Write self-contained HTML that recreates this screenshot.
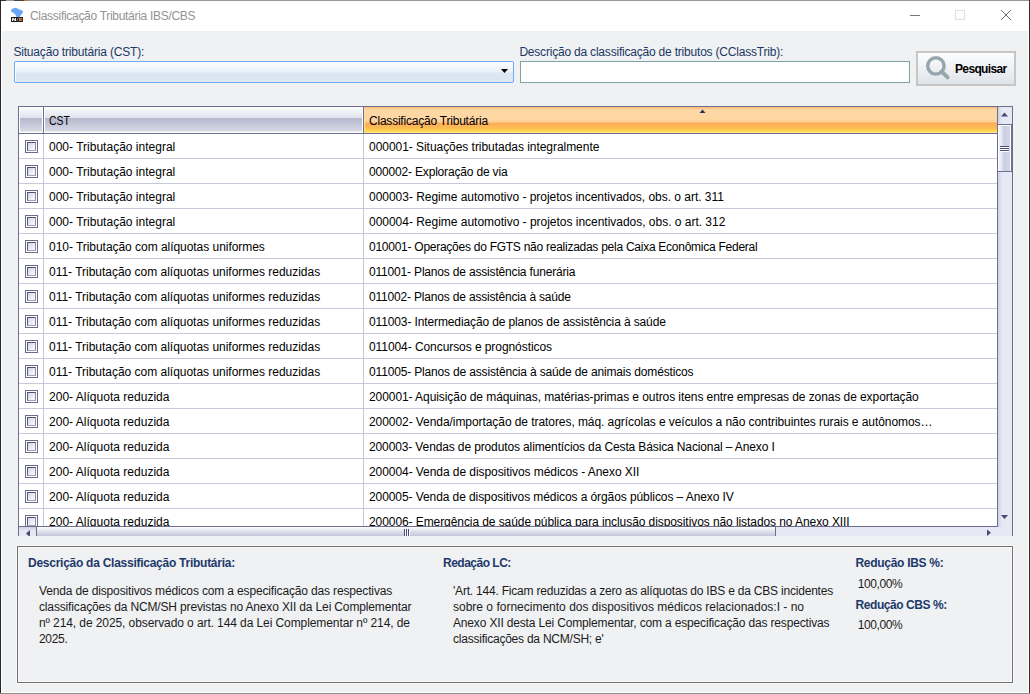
<!DOCTYPE html>
<html><head><meta charset="utf-8">
<style>
*{margin:0;padding:0;box-sizing:border-box}
html,body{width:1030px;height:694px;overflow:hidden;background:#f0f1f3}
body{position:relative;font-family:"Liberation Sans",sans-serif;font-size:12px;line-height:16px;color:#000}
.a{position:absolute}
.t{position:absolute;white-space:nowrap;font-size:12px;line-height:16px}
.b{font-weight:bold}
.lbl{color:#1b3764}
.hdr{color:#1d3a6a}
.txt{color:#1b1b1b}
</style></head><body>

<div class="a" style="left:0;top:0;width:1030px;height:1px;background:#9a9a9a"></div>
<div class="a" style="left:0;top:0;width:6px;height:1px;background:#333"></div>
<div class="a" style="left:14px;top:0;width:10px;height:1px;background:#444"></div>
<div class="a" style="left:24px;top:0;width:4px;height:1px;background:#c8742c"></div>
<div class="a" style="left:0;top:0;width:1px;height:694px;background:#262626"></div>
<div class="a" style="left:1029px;top:0;width:1px;height:694px;background:#333"></div>
<div class="a" style="left:0;top:693px;width:1030px;height:1px;background:#8c8c8c"></div>
<div class="a" style="left:1px;top:1px;width:1028px;height:692px;background:#fff"></div>
<div class="a" style="left:2px;top:31px;width:1026px;height:661px;background:#f0f1f3"></div>
<svg class="a" style="left:0;top:0" width="30" height="30" viewBox="0 0 30 30">
<path d="M11 10.5 L12 8.8 L13.5 8.6 L14.5 7.8 L16 8 L17.5 8.3 L18.5 9.3 L20.5 9.8 L23 11 L22.8 12.8 L21.3 14.6 L20 16.5 L18.5 18.5 L17.5 19.5 L16.8 18 L16 15.5 L14.8 14 L13.5 12.8 L11.5 12.2 Z" fill="#6aa6f6"/>
<rect x="11" y="17" width="12" height="5" fill="#1a1a1a"/>
<path d="M12 18 H13.3 L14.8 19.8 V18 H16 V21 H14.7 L13.2 19.2 V21 H12 Z" fill="#f2f2f2"/>
<path d="M16.5 21 L18 17.5 L18.6 17.5 L17.3 21 Z" fill="#6aa6f6"/>
<rect x="19" y="18" width="3.2" height="3" fill="#f08030"/>
<rect x="20.2" y="19.2" width="2" height="0.7" fill="#1a1a1a"/>
</svg>
<div id="title" class="t" style="left:30px;top:8px;letter-spacing:-0.297px;color:#939393">Classificação Tributária IBS/CBS</div>

<div class="a" style="left:910px;top:15px;width:10px;height:1px;background:#7a7a7a"></div>
<div class="a" style="left:955px;top:10px;width:10px;height:10px;border:1px solid #e0e0e0"></div>
<svg class="a" style="left:1000px;top:9px" width="12" height="12" viewBox="0 0 12 12"><path d="M1 1 L11 11 M11 1 L1 11" stroke="#6c6c6c" stroke-width="1"/></svg>
<div id="lbl1" class="t lbl" style="left:13.4px;top:44px;letter-spacing:-0.176px;">Situação tributária (CST):</div>

<div id="lbl2" class="t lbl" style="left:519.4px;top:44px;letter-spacing:-0.204px;">Descrição da classificação de tributos (CClassTrib):</div>

<div class="a" style="left:14px;top:61px;width:500px;height:22px;border:1px solid #6eaef6;border-radius:2px;box-shadow:inset 1px 1px 0 #fbfdff;background:linear-gradient(#fdfeff 0px,#e9f0f9 10px,#dde7f4 11px,#dbe5f3 20px)"></div>
<svg class="a" style="left:501px;top:69px" width="8" height="5" viewBox="0 0 8 5"><path d="M0 0 H7 L3.5 4 Z" fill="#000"/></svg>
<div class="a" style="left:520px;top:61px;width:390px;height:22px;border:1px solid #82a0a8;background:#fff"></div>
<div class="a" style="left:916px;top:51px;width:100px;height:35px;border:2px solid #c6c6c6;background:linear-gradient(#fdfdfe,#dfe4ea)"></div>
<svg class="a" style="left:924px;top:55px" width="28" height="26" viewBox="0 0 28 26"><circle cx="11.9" cy="10.9" r="8.2" fill="none" stroke="#95a6ad" stroke-width="3.4"/><path d="M17.5 16.5 L23.6 22.4" stroke="#95a6ad" stroke-width="3.9" stroke-linecap="round"/></svg>
<div id="btn" class="t b" style="left:955px;top:61px;letter-spacing:-0.65px;color:#000">Pesquisar</div>

<div class="a" style="left:18px;top:106px;width:995px;height:1px;background:#6e6e90"></div>
<div class="a" style="left:18px;top:106px;width:1px;height:430px;background:#6e6e90"></div>
<div class="a" style="left:1012px;top:106px;width:1px;height:430px;background:#6e6e90"></div>
<div class="a" style="left:19px;top:527px;width:993px;height:9px;background:#e6e8f3"></div>
<div class="a" style="left:998px;top:107px;width:14px;height:420px;background:#e6e8f3"></div>
<div class="a" style="left:19px;top:134px;width:978px;height:392px;background:#fff;overflow:hidden">
<div class="a" style="left:0;top:24px;width:978px;height:1px;background:#c8c8dc"></div>
<div class="a" style="left:6px;top:6px;width:13px;height:13px;border:1px solid #6a6a8a;background:#fff"></div>
<div class="a" style="left:8px;top:8px;width:9px;height:9px;border:1px solid;border-color:#4e4e78 #8a8aac #a0a0bc #5a5a80;background:linear-gradient(135deg,#d4d4e0,#fdfdff)"></div>
<div class="a" style="left:0;top:49px;width:978px;height:1px;background:#c8c8dc"></div>
<div class="a" style="left:6px;top:31px;width:13px;height:13px;border:1px solid #6a6a8a;background:#fff"></div>
<div class="a" style="left:8px;top:33px;width:9px;height:9px;border:1px solid;border-color:#4e4e78 #8a8aac #a0a0bc #5a5a80;background:linear-gradient(135deg,#d4d4e0,#fdfdff)"></div>
<div class="a" style="left:0;top:74px;width:978px;height:1px;background:#c8c8dc"></div>
<div class="a" style="left:6px;top:56px;width:13px;height:13px;border:1px solid #6a6a8a;background:#fff"></div>
<div class="a" style="left:8px;top:58px;width:9px;height:9px;border:1px solid;border-color:#4e4e78 #8a8aac #a0a0bc #5a5a80;background:linear-gradient(135deg,#d4d4e0,#fdfdff)"></div>
<div class="a" style="left:0;top:99px;width:978px;height:1px;background:#c8c8dc"></div>
<div class="a" style="left:6px;top:81px;width:13px;height:13px;border:1px solid #6a6a8a;background:#fff"></div>
<div class="a" style="left:8px;top:83px;width:9px;height:9px;border:1px solid;border-color:#4e4e78 #8a8aac #a0a0bc #5a5a80;background:linear-gradient(135deg,#d4d4e0,#fdfdff)"></div>
<div class="a" style="left:0;top:124px;width:978px;height:1px;background:#c8c8dc"></div>
<div class="a" style="left:6px;top:106px;width:13px;height:13px;border:1px solid #6a6a8a;background:#fff"></div>
<div class="a" style="left:8px;top:108px;width:9px;height:9px;border:1px solid;border-color:#4e4e78 #8a8aac #a0a0bc #5a5a80;background:linear-gradient(135deg,#d4d4e0,#fdfdff)"></div>
<div class="a" style="left:0;top:149px;width:978px;height:1px;background:#c8c8dc"></div>
<div class="a" style="left:6px;top:131px;width:13px;height:13px;border:1px solid #6a6a8a;background:#fff"></div>
<div class="a" style="left:8px;top:133px;width:9px;height:9px;border:1px solid;border-color:#4e4e78 #8a8aac #a0a0bc #5a5a80;background:linear-gradient(135deg,#d4d4e0,#fdfdff)"></div>
<div class="a" style="left:0;top:174px;width:978px;height:1px;background:#c8c8dc"></div>
<div class="a" style="left:6px;top:156px;width:13px;height:13px;border:1px solid #6a6a8a;background:#fff"></div>
<div class="a" style="left:8px;top:158px;width:9px;height:9px;border:1px solid;border-color:#4e4e78 #8a8aac #a0a0bc #5a5a80;background:linear-gradient(135deg,#d4d4e0,#fdfdff)"></div>
<div class="a" style="left:0;top:199px;width:978px;height:1px;background:#c8c8dc"></div>
<div class="a" style="left:6px;top:181px;width:13px;height:13px;border:1px solid #6a6a8a;background:#fff"></div>
<div class="a" style="left:8px;top:183px;width:9px;height:9px;border:1px solid;border-color:#4e4e78 #8a8aac #a0a0bc #5a5a80;background:linear-gradient(135deg,#d4d4e0,#fdfdff)"></div>
<div class="a" style="left:0;top:224px;width:978px;height:1px;background:#c8c8dc"></div>
<div class="a" style="left:6px;top:206px;width:13px;height:13px;border:1px solid #6a6a8a;background:#fff"></div>
<div class="a" style="left:8px;top:208px;width:9px;height:9px;border:1px solid;border-color:#4e4e78 #8a8aac #a0a0bc #5a5a80;background:linear-gradient(135deg,#d4d4e0,#fdfdff)"></div>
<div class="a" style="left:0;top:249px;width:978px;height:1px;background:#c8c8dc"></div>
<div class="a" style="left:6px;top:231px;width:13px;height:13px;border:1px solid #6a6a8a;background:#fff"></div>
<div class="a" style="left:8px;top:233px;width:9px;height:9px;border:1px solid;border-color:#4e4e78 #8a8aac #a0a0bc #5a5a80;background:linear-gradient(135deg,#d4d4e0,#fdfdff)"></div>
<div class="a" style="left:0;top:274px;width:978px;height:1px;background:#c8c8dc"></div>
<div class="a" style="left:6px;top:256px;width:13px;height:13px;border:1px solid #6a6a8a;background:#fff"></div>
<div class="a" style="left:8px;top:258px;width:9px;height:9px;border:1px solid;border-color:#4e4e78 #8a8aac #a0a0bc #5a5a80;background:linear-gradient(135deg,#d4d4e0,#fdfdff)"></div>
<div class="a" style="left:0;top:299px;width:978px;height:1px;background:#c8c8dc"></div>
<div class="a" style="left:6px;top:281px;width:13px;height:13px;border:1px solid #6a6a8a;background:#fff"></div>
<div class="a" style="left:8px;top:283px;width:9px;height:9px;border:1px solid;border-color:#4e4e78 #8a8aac #a0a0bc #5a5a80;background:linear-gradient(135deg,#d4d4e0,#fdfdff)"></div>
<div class="a" style="left:0;top:324px;width:978px;height:1px;background:#c8c8dc"></div>
<div class="a" style="left:6px;top:306px;width:13px;height:13px;border:1px solid #6a6a8a;background:#fff"></div>
<div class="a" style="left:8px;top:308px;width:9px;height:9px;border:1px solid;border-color:#4e4e78 #8a8aac #a0a0bc #5a5a80;background:linear-gradient(135deg,#d4d4e0,#fdfdff)"></div>
<div class="a" style="left:0;top:349px;width:978px;height:1px;background:#c8c8dc"></div>
<div class="a" style="left:6px;top:331px;width:13px;height:13px;border:1px solid #6a6a8a;background:#fff"></div>
<div class="a" style="left:8px;top:333px;width:9px;height:9px;border:1px solid;border-color:#4e4e78 #8a8aac #a0a0bc #5a5a80;background:linear-gradient(135deg,#d4d4e0,#fdfdff)"></div>
<div class="a" style="left:0;top:374px;width:978px;height:1px;background:#c8c8dc"></div>
<div class="a" style="left:6px;top:356px;width:13px;height:13px;border:1px solid #6a6a8a;background:#fff"></div>
<div class="a" style="left:8px;top:358px;width:9px;height:9px;border:1px solid;border-color:#4e4e78 #8a8aac #a0a0bc #5a5a80;background:linear-gradient(135deg,#d4d4e0,#fdfdff)"></div>
<div class="a" style="left:0;top:399px;width:978px;height:1px;background:#c8c8dc"></div>
<div class="a" style="left:6px;top:381px;width:13px;height:13px;border:1px solid #6a6a8a;background:#fff"></div>
<div class="a" style="left:8px;top:383px;width:9px;height:9px;border:1px solid;border-color:#4e4e78 #8a8aac #a0a0bc #5a5a80;background:linear-gradient(135deg,#d4d4e0,#fdfdff)"></div>
<div class="a" style="left:24px;top:0;width:1px;height:392px;background:#c8c8dc"></div>
<div class="a" style="left:344px;top:0;width:1px;height:392px;background:#c8c8dc"></div>
<div id="c1_0" class="t" style="left:30px;top:5px;letter-spacing:0.009px;">000- Tributação integral</div>

<div id="c2_0" class="t" style="left:350px;top:5px;letter-spacing:-0.044px;">000001- Situações tributadas integralmente</div>

<div id="c1_1" class="t" style="left:30px;top:30px;letter-spacing:0.009px;">000- Tributação integral</div>

<div id="c2_1" class="t" style="left:350px;top:30px;letter-spacing:-0.175px;">000002- Exploração de via</div>

<div id="c1_2" class="t" style="left:30px;top:55px;letter-spacing:0.009px;">000- Tributação integral</div>

<div id="c2_2" class="t" style="left:350px;top:55px;letter-spacing:-0.027px;">000003- Regime automotivo - projetos incentivados, obs. o art. 311</div>

<div id="c1_3" class="t" style="left:30px;top:80px;letter-spacing:0.009px;">000- Tributação integral</div>

<div id="c2_3" class="t" style="left:350px;top:80px;letter-spacing:-0.019px;">000004- Regime automotivo - projetos incentivados, obs. o art. 312</div>

<div id="c1_4" class="t" style="left:30px;top:105px;letter-spacing:-0.042px;">010- Tributação com alíquotas uniformes</div>

<div id="c2_4" class="t" style="left:350px;top:105px;letter-spacing:-0.259px;">010001- Operações do FGTS não realizadas pela Caixa Econômica Federal</div>

<div id="c1_5" class="t" style="left:30px;top:130px;letter-spacing:-0.016px;">011- Tributação com alíquotas uniformes reduzidas</div>

<div id="c2_5" class="t" style="left:350px;top:130px;letter-spacing:-0.179px;">011001- Planos de assistência funerária</div>

<div id="c1_6" class="t" style="left:30px;top:155px;letter-spacing:-0.016px;">011- Tributação com alíquotas uniformes reduzidas</div>

<div id="c2_6" class="t" style="left:350px;top:155px;letter-spacing:-0.183px;">011002- Planos de assistência à saúde</div>

<div id="c1_7" class="t" style="left:30px;top:180px;letter-spacing:-0.016px;">011- Tributação com alíquotas uniformes reduzidas</div>

<div id="c2_7" class="t" style="left:350px;top:180px;letter-spacing:-0.121px;">011003- Intermediação de planos de assistência à saúde</div>

<div id="c1_8" class="t" style="left:30px;top:205px;letter-spacing:-0.016px;">011- Tributação com alíquotas uniformes reduzidas</div>

<div id="c2_8" class="t" style="left:350px;top:205px;letter-spacing:-0.071px;">011004- Concursos e prognósticos</div>

<div id="c1_9" class="t" style="left:30px;top:230px;letter-spacing:-0.016px;">011- Tributação com alíquotas uniformes reduzidas</div>

<div id="c2_9" class="t" style="left:350px;top:230px;letter-spacing:-0.162px;">011005- Planos de assistência à saúde de animais domésticos</div>

<div id="c1_10" class="t" style="left:30px;top:255px;letter-spacing:0.019px;">200- Alíquota reduzida</div>

<div id="c2_10" class="t" style="left:350px;top:255px;letter-spacing:-0.074px;">200001- Aquisição de máquinas, matérias-primas e outros itens entre empresas de zonas de exportação</div>

<div id="c1_11" class="t" style="left:30px;top:280px;letter-spacing:0.019px;">200- Alíquota reduzida</div>

<div id="c2_11" class="t" style="left:350px;top:280px;letter-spacing:-0.067px;">200002- Venda/importação de tratores, máq. agrícolas e veículos a não contribuintes rurais e autônomos…</div>

<div id="c1_12" class="t" style="left:30px;top:305px;letter-spacing:0.019px;">200- Alíquota reduzida</div>

<div id="c2_12" class="t" style="left:350px;top:305px;letter-spacing:-0.126px;">200003- Vendas de produtos alimentícios da Cesta Básica Nacional – Anexo I</div>

<div id="c1_13" class="t" style="left:30px;top:330px;letter-spacing:0.019px;">200- Alíquota reduzida</div>

<div id="c2_13" class="t" style="left:350px;top:330px;letter-spacing:-0.067px;">200004- Venda de dispositivos médicos - Anexo XII</div>

<div id="c1_14" class="t" style="left:30px;top:355px;letter-spacing:0.019px;">200- Alíquota reduzida</div>

<div id="c2_14" class="t" style="left:350px;top:355px;letter-spacing:-0.083px;">200005- Venda de dispositivos médicos a órgãos públicos – Anexo IV</div>

<div id="c1_15" class="t" style="left:30px;top:380px;letter-spacing:0.019px;">200- Alíquota reduzida</div>

<div id="c2_15" class="t" style="left:350px;top:380px;letter-spacing:-0.079px;">200006- Emergência de saúde pública para inclusão dispositivos não listados no Anexo XIII</div>

</div>
<div class="a" style="left:18px;top:526px;width:980px;height:1px;background:#6e6e90"></div>
<div class="a" style="left:997px;top:106px;width:1px;height:421px;background:#6e6e90"></div>
<div class="a" style="left:19px;top:107px;width:978px;height:26px;background:linear-gradient(#fdfdfe 0px,#eceef5 6px,#dfe1ec 11px,#b5b9cd 11px,#c3c6d7 17px,#d8d9e4 24px,#ffffff 25px)"></div>
<div class="a" style="left:19px;top:107px;width:1px;height:26px;background:#fff"></div>
<div class="a" style="left:44px;top:107px;width:1px;height:26px;background:#fff"></div>
<div class="a" style="left:42px;top:107px;width:1px;height:26px;background:#fff"></div>
<div class="a" style="left:362px;top:107px;width:1px;height:26px;background:#fff"></div>
<div class="a" style="left:364px;top:107px;width:633px;height:26px;background:linear-gradient(#fdbb72 0px,#fed8a6 3px,#fed7a2 12px,#fdd095 15px,#fcab58 16px,#fdbd55 21px,#fed548 24px,#fee37a 25px)"></div>
<div class="a" style="left:364px;top:108px;width:1px;height:24px;background:linear-gradient(#fde0a0,#fde070)"></div>
<div class="a" style="left:18px;top:133px;width:980px;height:1px;background:#6e6e90"></div>
<div class="a" style="left:43px;top:107px;width:1px;height:27px;background:#6e6e90"></div>
<div class="a" style="left:363px;top:107px;width:1px;height:27px;background:#6e6e90"></div>
<div id="h1" class="t" style="left:49px;top:113px;letter-spacing:0px;transform:scaleX(0.87);transform-origin:0 0">CST</div>

<div id="h2" class="t" style="left:369px;top:113px;letter-spacing:-0.217px;">Classificação Tributária</div>

<svg class="a" style="left:699px;top:109px" width="7" height="5" viewBox="0 0 7 5"><path d="M0.5 4 L3.5 0.5 L6.5 4 Z" fill="#2b3262"/></svg>
<div class="a" style="left:998px;top:107px;width:14px;height:17px;background:linear-gradient(90deg,#cdd1e3,#e6e8f3 4px)"></div>
<svg class="a" style="left:1001px;top:112px" width="8" height="6" viewBox="0 0 8 6"><path d="M0 4.5 H7 L3.5 0.5 Z" fill="#4a4a72"/></svg>
<div class="a" style="left:998px;top:124px;width:13px;height:48px;border-top:1px solid #6e6e90;border-bottom:1px solid #6e6e90;background:#fff"></div>
<div class="a" style="left:1011px;top:124px;width:1px;height:48px;background:#6e6e90"></div>
<div class="a" style="left:999px;top:126px;width:11px;height:45px;background:linear-gradient(90deg,#f4f5fa,#e2e4ef 3px,#c9cde1 5px,#d3d6e6 11px)"></div>
<div class="a" style="left:1000px;top:147px;width:9px;height:1px;background:#fafbfe"></div>
<div class="a" style="left:1000px;top:149px;width:9px;height:1px;background:#fafbfe"></div>
<div class="a" style="left:1000px;top:151px;width:9px;height:1px;background:#fafbfe"></div>
<div class="a" style="left:1000px;top:146px;width:9px;height:1px;background:#4c4c74"></div>
<div class="a" style="left:1000px;top:148px;width:9px;height:1px;background:#4c4c74"></div>
<div class="a" style="left:1000px;top:150px;width:9px;height:1px;background:#4c4c74"></div>
<div class="a" style="left:998px;top:172px;width:14px;height:355px;background:linear-gradient(90deg,#cdd1e3,#e6e8f3 4px)"></div>
<svg class="a" style="left:1001px;top:515px" width="8" height="5" viewBox="0 0 8 5"><path d="M0 0 H7 L3.5 4 Z" fill="#4a4a72"/></svg>
<div class="a" style="left:19px;top:527px;width:17px;height:9px;background:linear-gradient(#cdd1e3,#e6e8f3 4px)"></div>
<svg class="a" style="left:25px;top:527px" width="6" height="9" viewBox="0 0 6 9"><path d="M5 3 V10 L1 6.5 Z" fill="#4a4a72"/></svg>
<div class="a" style="left:36px;top:527px;width:1px;height:9px;background:#6e6e90"></div>
<div class="a" style="left:37px;top:527px;width:738px;height:9px;background:linear-gradient(#ffffff 0px,#f0f1f7 2px,#d4d7e6 6px,#c4c8dc 9px)"></div>
<div class="a" style="left:775px;top:527px;width:1px;height:9px;background:#6e6e90"></div>
<div class="a" style="left:405px;top:529px;width:1px;height:7px;background:#fafbfe"></div>
<div class="a" style="left:407px;top:529px;width:1px;height:7px;background:#fafbfe"></div>
<div class="a" style="left:409px;top:529px;width:1px;height:7px;background:#fafbfe"></div>
<div class="a" style="left:404px;top:529px;width:1px;height:7px;background:#4c4c74"></div>
<div class="a" style="left:406px;top:529px;width:1px;height:7px;background:#4c4c74"></div>
<div class="a" style="left:408px;top:529px;width:1px;height:7px;background:#4c4c74"></div>
<svg class="a" style="left:986px;top:529px" width="6" height="8" viewBox="0 0 6 8"><path d="M1 0.5 V7 L5 3.75 Z" fill="#4a4a72"/></svg>
<div class="a" style="left:16px;top:545px;width:998px;height:139px;border:1px solid #fafafa"></div>
<div class="a" style="left:17px;top:546px;width:996px;height:137px;border:1px solid #707070"></div>
<div class="a" style="left:18px;top:547px;width:994px;height:135px;border:1px solid #fafafa"></div>
<div id="bh1" class="t b hdr" style="left:28px;top:555px;letter-spacing:-0.259px;">Descrição da Classificação Tributária:</div>

<div id="d0" class="t txt" style="left:39px;top:583px;letter-spacing:-0.15px;">Venda de dispositivos médicos com a especificação das respectivas</div>

<div id="d1" class="t txt" style="left:39px;top:599px;letter-spacing:-0.148px;">classificações da NCM/SH previstas no Anexo XII da Lei Complementar</div>

<div id="d2" class="t txt" style="left:39px;top:615px;letter-spacing:-0.09px;">nº 214, de 2025, observado o art. 144 da Lei Complementar nº 214, de</div>

<div id="d3" class="t txt" style="left:39px;top:631px;letter-spacing:-0.3px;">2025.</div>

<div id="bh2" class="t b hdr" style="left:443px;top:555px;letter-spacing:-0.5px;">Redação LC:</div>

<div id="r0" class="t txt" style="left:453px;top:583px;letter-spacing:-0.208px;">'Art. 144. Ficam reduzidas a zero as alíquotas do IBS e da CBS incidentes</div>

<div id="r1" class="t txt" style="left:453px;top:599px;letter-spacing:0.003px;">sobre o fornecimento dos dispositivos médicos relacionados:I - no</div>

<div id="r2" class="t txt" style="left:453px;top:615px;letter-spacing:-0.161px;">Anexo XII desta Lei Complementar, com a especificação das respectivas</div>

<div id="r3" class="t txt" style="left:453px;top:631px;letter-spacing:-0.23px;">classificações da NCM/SH; e'</div>

<div id="bh3" class="t b hdr" style="left:855.5px;top:555px;letter-spacing:-0.293px;">Redução IBS %:</div>

<div id="v1" class="t txt" style="left:857.8px;top:576px;letter-spacing:-0.433px;">100,00%</div>

<div id="bh4" class="t b hdr" style="left:855.5px;top:597px;letter-spacing:-0.431px;">Redução CBS %:</div>

<div id="v2" class="t txt" style="left:857.8px;top:617px;letter-spacing:-0.433px;">100,00%</div>

</body></html>
